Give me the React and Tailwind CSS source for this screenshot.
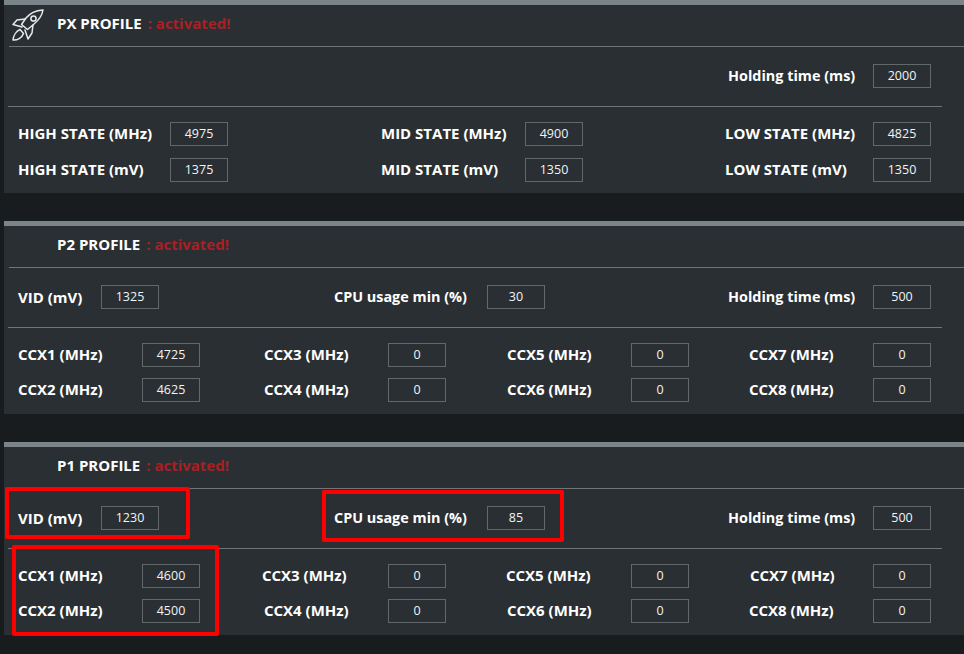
const Box = ({ value }) => (
  <div className="w-[58px] h-6 pt-px border border-[#63686b] flex items-center justify-center text-[12.5px] font-normal text-[#f2f4f5]">
    {value}
  </div>
);

const Field = ({ label, value, width, labelClass = "pb-[2px]" }) => (
  <div className={`${width} justify-self-end flex items-center justify-between`}>
    <span className={`whitespace-nowrap ${labelClass}`}>{label}</span>
    <Box value={value} />
  </div>
);

const Divider = ({ className }) => <div className={`h-px bg-[#6f7579] ${className}`} />;

const Rocket = () => (
  <svg viewBox="0 0 32 33" className="absolute left-2 top-1 w-8 h-[33px]" fill="none" stroke="#e8eaeb" strokeWidth="1.5" strokeLinejoin="round" strokeLinecap="round">
    <path d="M31 1 C24 1.5 18 4 14 9 L9.5 15.5 L15.5 20.5 L21.5 15.5 C27 11 30 7 31 1 Z" />
    <circle cx="21.5" cy="9.5" r="2.6" />
    <path d="M13 10 L5 11 L1 15.5 L10 18" />
    <path d="M21 16 L20 24 L16 30 L13 21" />
    <path d="M8 20.5 C4 22 1.5 27 1 31 C5 31.5 10 29 11.5 24.5 Z" />
  </svg>
);

const Panel = ({ title, icon, children, boxes, className }) => (
  <section className={`relative ml-1 h-[193px] bg-[#2a2f33] border-t-[5px] border-[#7b8589] ${className}`}>
    {icon}
    <div className="h-[41px] pl-[53px] pb-1 flex items-center">
      <span>{title}</span>
      <span className="ml-[6px] text-[#a81f24]">: activated!</span>
    </div>
    <Divider className="ml-[5px]" />
    {children}
    {boxes}
  </section>
);

// colonnes alignees sur le bord droit des champs
const fourCols = "grid grid-cols-[182px_246px_243px_242px] ml-[14px]";
const stateCols = "grid grid-cols-[210px_355px_348px] ml-[14px]";
const topCols = "grid grid-cols-[141px_386px_386px] ml-[14px]";
const mixedLabel = "text-[14.4px]";

const TopRow = ({ children }) => (
  <div className={`${topCols} h-[59px] pb-px items-center`}>{children}</div>
);

const PxProfile = () => (
  <Panel title="PX PROFILE" icon={<Rocket />}>
    <TopRow>
      <div />
      <div />
      <Field label="Holding time (ms)" value="2000" width="w-[203px]" labelClass={mixedLabel} />
    </TopRow>
    <Divider className="ml-1 mr-[22px]" />
    <div className={`${stateCols} pt-[15px] gap-y-[11px]`}>
      <Field label="HIGH STATE (MHz)" value="4975" width="w-[210px]" />
      <Field label="MID STATE (MHz)" value="4900" width="w-[202px]" />
      <Field label="LOW STATE (MHz)" value="4825" width="w-[206px]" />
      <Field label="HIGH STATE (mV)" value="1375" width="w-[210px]" />
      <Field label="MID STATE (mV)" value="1350" width="w-[202px]" />
      <Field label="LOW STATE (mV)" value="1350" width="w-[206px]" />
    </div>
  </Panel>
);

const CoreProfile = ({ title, vid, usage, holding, ccx, ccxWidths, boxes, className }) => (
  <Panel title={title} boxes={boxes} className={className}>
    <TopRow>
      <Field label="VID (mV)" value={vid} width="w-[141px]" labelClass="" />
      <Field label="CPU usage min (%)" value={usage} width="w-[211px]" labelClass={mixedLabel} />
      <Field label="Holding time (ms)" value={holding} width="w-[203px]" labelClass={mixedLabel} />
    </TopRow>
    <Divider className="ml-1 mr-[22px]" />
    <div className={`${fourCols} pt-[15px] gap-y-[10px]`}>
      {[0, 2, 4, 6, 1, 3, 5, 7].map((i) => (
        <Field key={i} label={`CCX${i + 1} (MHz)`} value={ccx[i]} width={ccxWidths[i]} />
      ))}
    </div>
  </Panel>
);

const HighlightBox = ({ className }) => (
  <div className={`absolute border-4 border-[#fe0000] rounded-[2px] ${className}`} />
);

export default function App() {
  return (
    <div className="w-[964px] h-[654px] overflow-hidden bg-[#181c1f] text-white text-[15px] font-bold font-['Open_Sans','Noto_Sans',sans-serif]">
      <PxProfile />
      <CoreProfile
        className="mt-7"
        title="P2 PROFILE"
        vid="1325"
        usage="30"
        holding="500"
        ccx={["4725", "4625", "0", "0", "0", "0", "0", "0"]}
        ccxWidths={["w-[182px]", "w-[182px]", "w-[182px]", "w-[182px]", "w-[182px]", "w-[182px]", "w-[182px]", "w-[182px]"]}
      />
      <CoreProfile
        className="mt-7"
        title="P1 PROFILE"
        vid="1230"
        usage="85"
        holding="500"
        ccx={["4600", "4500", "0", "0", "0", "0", "0", "0"]}
        ccxWidths={["w-[182px]", "w-[182px]", "w-[184px]", "w-[182px]", "w-[183px]", "w-[182px]", "w-[181px]", "w-[182px]"]}
        boxes={
          <>
            <HighlightBox className="left-px top-[40px] w-[185px] h-[52px]" />
            <HighlightBox className="left-[318px] top-[43px] w-[242px] h-[52px]" />
            <HighlightBox className="left-2 top-[98px] w-[207px] h-[91px]" />
          </>
        }
      />
    </div>
  );
}
